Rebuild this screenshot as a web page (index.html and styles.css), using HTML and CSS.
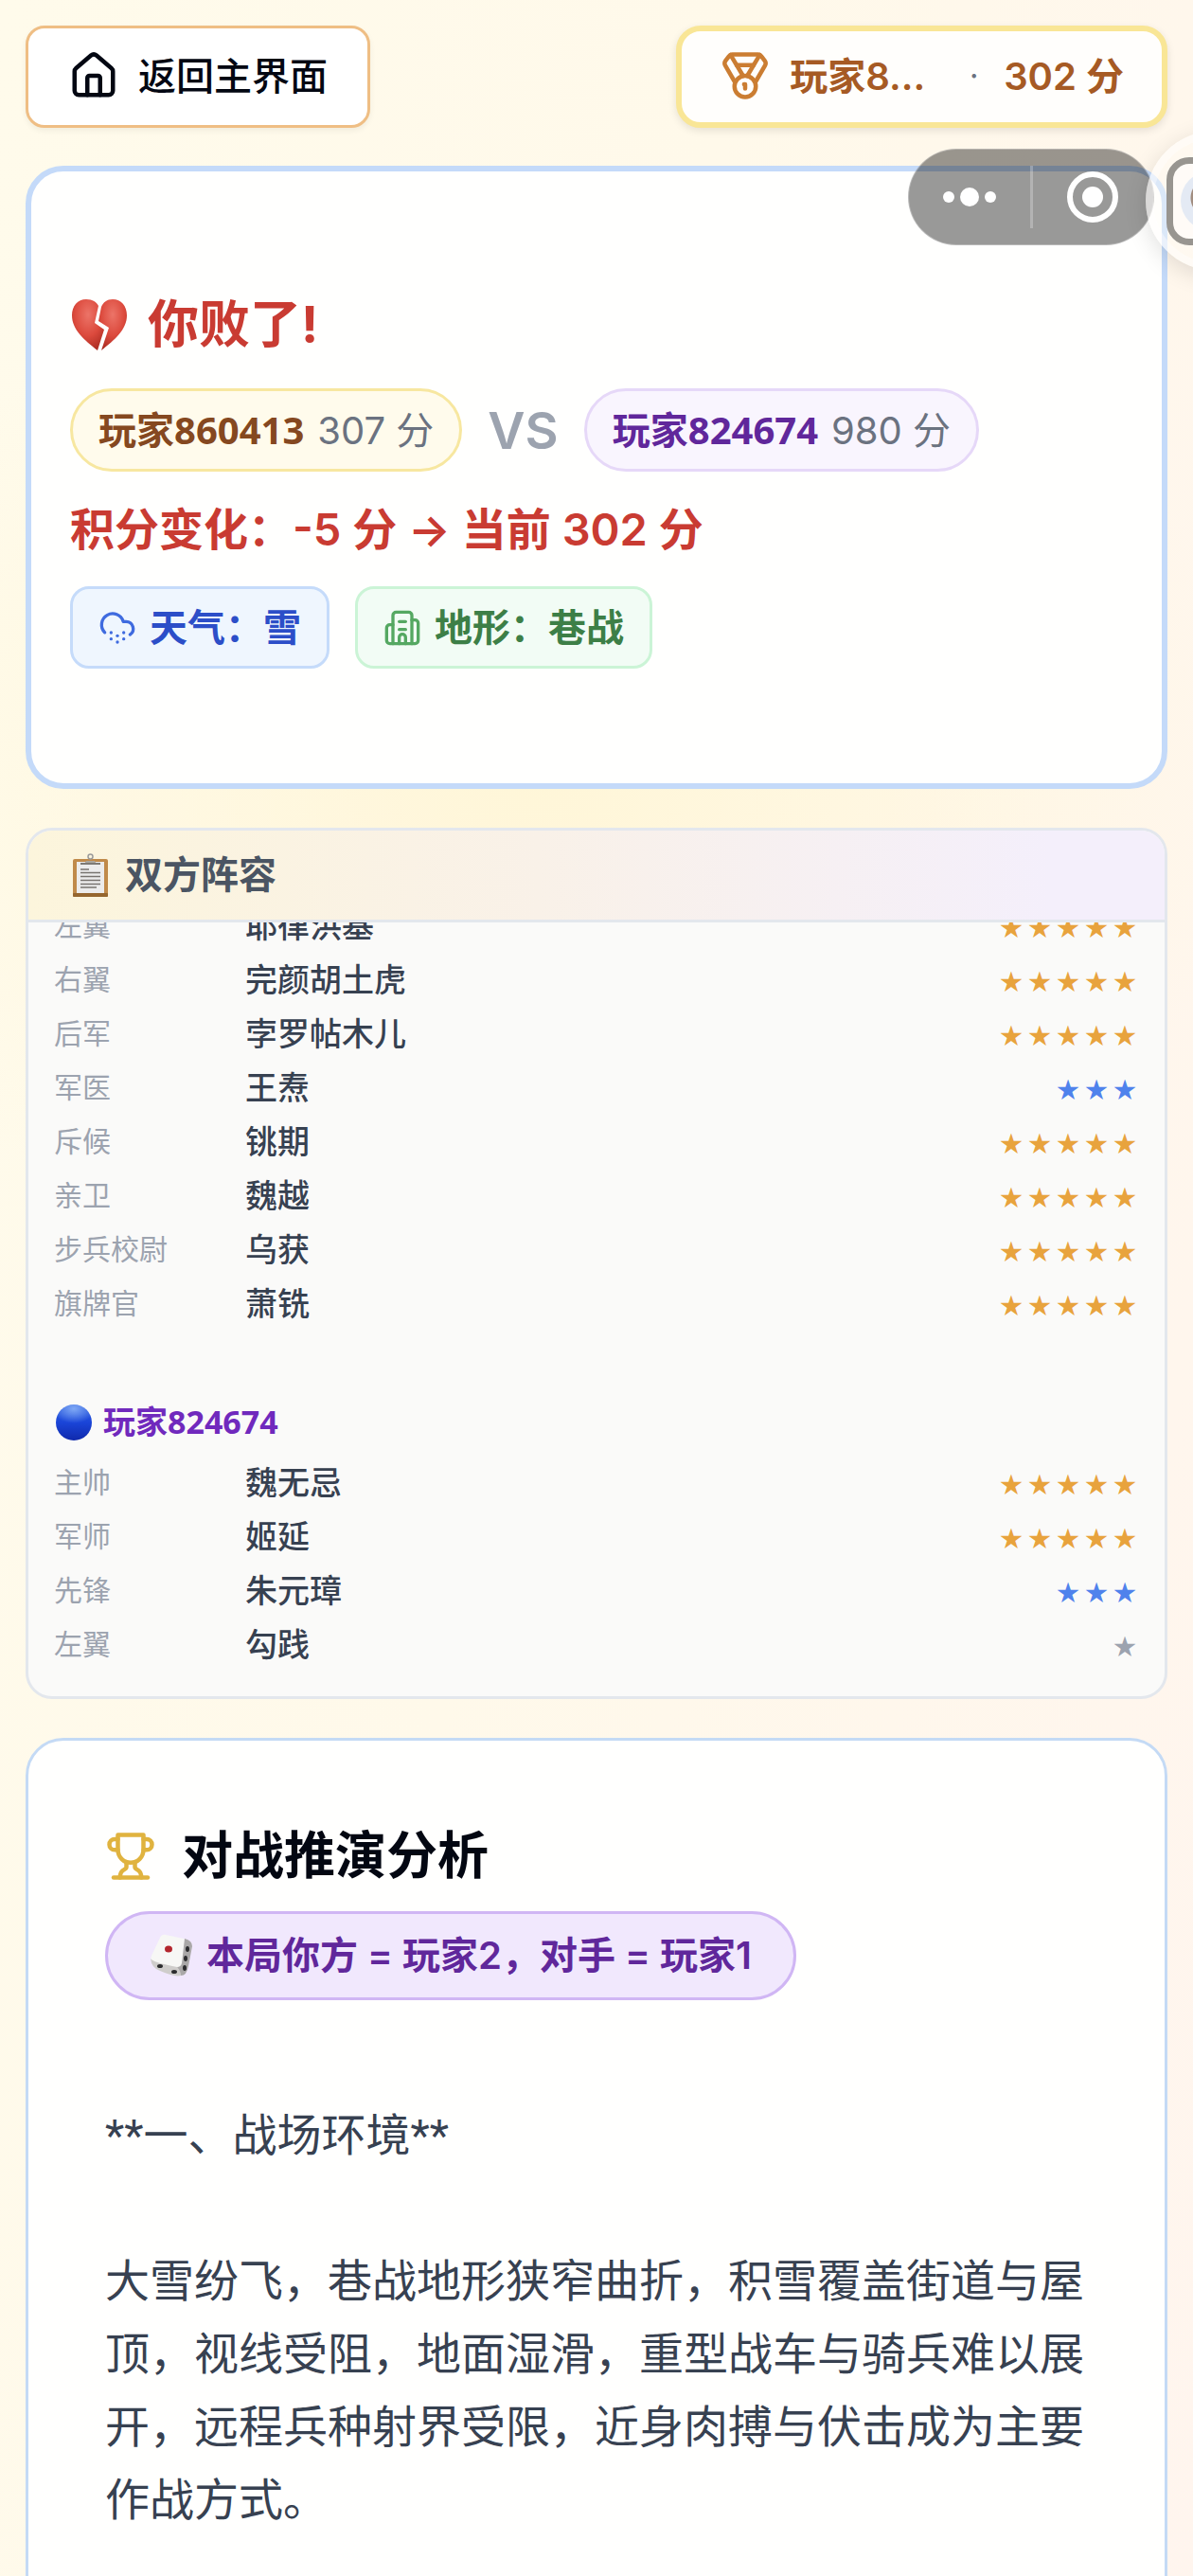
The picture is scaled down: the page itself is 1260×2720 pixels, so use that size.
FILE: index.html
```
<!DOCTYPE html>
<html lang="zh-CN">
<head>
    <meta charset="UTF-8">
    <meta name="viewport" content="width=device-width, initial-scale=1.0">
    <title>对战结果</title>
    <link rel="stylesheet" href="styles.css">
</head>
<body>
    <header class="topbar">
        <button class="home-btn" type="button">
            <svg class="icon icon-lg" viewBox="0 0 24 24"><path d="M15 21v-8a1 1 0 0 0-1-1h-4a1 1 0 0 0-1 1v8"/><path d="M3 10a2 2 0 0 1 .709-1.528l7-5.999a2 2 0 0 1 2.582 0l7 5.999A2 2 0 0 1 21 10v9a2 2 0 0 1-2 2H5a2 2 0 0 1-2-2z"/></svg>
            返回主界面
        </button>
        <div class="score-card">
            <svg class="icon icon-lg medal" viewBox="0 0 24 24"><path d="M7.21 15 2.66 7.14a2 2 0 0 1 .13-2.2L4.4 2.8A2 2 0 0 1 6 2h12a2 2 0 0 1 1.6.8l1.6 2.14a2 2 0 0 1 .14 2.2L16.79 15"/><path d="M11 12 5.12 2.2"/><path d="m13 12 5.88-9.8"/><path d="M8 7h8"/><circle cx="12" cy="17" r="5"/><path d="M12 18v-2h-.5"/></svg>
            <span class="score-name">玩家8...</span>
            <span class="score-dot">·</span>
            <span>302 分</span>
        </div>
    </header>

    <main class="page">
        <section class="result-card">
            <h1 class="result-title">
                <svg class="heart" viewBox="0 0 60 56">
                    <defs>
                        <radialGradient id="heartFill" cx="50%" cy="30%" r="75%">
                            <stop offset="0" stop-color="#ec7468"/>
                            <stop offset=".55" stop-color="#dc4a3d"/>
                            <stop offset="1" stop-color="#a82a20"/>
                        </radialGradient>
                    </defs>
                    <path fill="url(#heartFill)" d="M28 55C14 44 1 33 1 18 1 8 7 1 16 1c7 0 11 3 13 7l-4 18 10 7z"/>
                    <path fill="url(#heartFill)" d="M32 55 40 31l-11-7 3-15C34 4 38 1 44 1c9 0 15 7 15 17 0 15-13 26-27 37z"/>
                </svg>
                你败了!
            </h1>
            <div class="versus">
                <span class="player player-self"><b>玩家860413</b><span>307 分</span></span>
                <span class="vs">VS</span>
                <span class="player player-rival"><b>玩家824674</b><span>980 分</span></span>
            </div>
            <p class="change">积分变化：-5 分 → 当前 302 分</p>
            <div class="chips">
                <span class="chip chip-weather">
                    <svg class="icon icon-sm" viewBox="0 0 24 24"><path d="M4 14.899A7 7 0 1 1 15.71 8h1.79a4.5 4.5 0 0 1 2.5 8.242"/><path d="M8 15h.01"/><path d="M8 19h.01"/><path d="M12 17h.01"/><path d="M12 21h.01"/><path d="M16 15h.01"/><path d="M16 19h.01"/></svg>
                    天气：雪
                </span>
                <span class="chip chip-terrain">
                    <svg class="icon icon-sm" viewBox="0 0 24 24"><path d="M6 22V4a2 2 0 0 1 2-2h8a2 2 0 0 1 2 2v18z"/><path d="M6 10H4a2 2 0 0 0-2 2v8a2 2 0 0 0 2 2h2"/><path d="M18 7h2a2 2 0 0 1 2 2v11a2 2 0 0 1-2 2h-2"/><path d="M10 22v-4a2 2 0 0 1 4 0v4"/><path d="M10 8h4"/><path d="M10 13h4"/></svg>
                    地形：巷战
                </span>
            </div>
        </section>

        <section class="roster-card">
            <h2 class="roster-title">
                <svg class="clipboard" viewBox="0 0 37 46">
                    <rect x="0" y="6" width="37" height="40" rx="2" fill="#c08a4a"/>
                    <rect x="0" y="42" width="37" height="4" rx="1" fill="#95662f"/>
                    <rect x="4" y="9" width="29" height="33" fill="#ececec"/>
                    <circle cx="18.500" cy="3.500" r="2.500" fill="none" stroke="#9b9b9b" stroke-width="1.500"/>
                    <path d="M14 8h9l2 3H12z" fill="#aaa59c"/>
                    <path d="M8 11h21" stroke="#7d7a76" stroke-width="2"/>
                    <path d="M8 17h9M8 20.500h21M8 24.500h21M8 28.500h21M8 32.500h21M8 36h17" stroke="#77736f" stroke-width="1.500"/>
                </svg>
                双方阵容
            </h2>
            <div class="roster-list" id="roster-list"></div>
        </section>

        <section class="analysis-card">
            <h2 class="analysis-title">
                <svg class="icon icon-lg trophy" viewBox="0 0 24 24"><path d="M6 9H4.500a2.500 2.500 0 0 1 0-5H6"/><path d="M18 9h1.500a2.500 2.500 0 0 0 0-5H18"/><path d="M4 22h16"/><path d="M10 14.660V17c0 .550-.470.980-.970 1.210C7.850 18.750 7 20.240 7 22"/><path d="M14 14.660V17c0 .550.470.980.970 1.210C16.150 18.750 17 20.240 17 22"/><path d="M18 2H6v7a6 6 0 0 0 12 0V2Z"/></svg>
                对战推演分析
            </h2>
            <div class="side-pill">
                <svg class="dice" viewBox="0 0 46 46">
                    <path d="M17 1Q13 0 11 4L2 23q-2 5 2 7l25 6q4 1 5-3l5-22q1-5-3-6z" fill="#f7f7f5"/>
                    <path d="M37 5q8 2 8 8l-4 21q-2 11-9 10l-3-9q4 0 5-4z" fill="#aaa8a8"/>
                    <path d="M1 26q2 4 28 9 4 4 4 9-6 2-22-5Q2 36 1 26z" fill="#cfcdcb"/>
                    <ellipse cx="20" cy="16" rx="4" ry="3.500" fill="#b3262e"/>
                    <g fill="#2c2c2e"><ellipse cx="40" cy="16" rx="2" ry="3"/><ellipse cx="38" cy="26" rx="2" ry="3"/><ellipse cx="37" cy="36" rx="2" ry="3"/><ellipse cx="11" cy="34" rx="3" ry="2"/><ellipse cx="26" cy="40" rx="3" ry="2"/></g>
                </svg>
                本局你方 = 玩家2，对手 = 玩家1
            </div>
            <div class="report">
                <p>**一、战场环境**</p>
                <p>大雪纷飞，巷战地形狭窄曲折，积雪覆盖街道与屋顶，视线受阻，地面湿滑，重型战车与骑兵难以展开，远程兵种射界受限，近身肉搏与伏击成为主要作战方式。</p>
            </div>
        </section>
    </main>

    <div class="capsule">
        <button class="capsule-btn" type="button" aria-label="更多">
            <svg width="56" height="54" viewBox="0 0 56 54"><g fill="#fff"><circle cx="6" cy="27" r="6"/><circle cx="28" cy="27" r="10"/><circle cx="50" cy="27" r="6"/></g></svg>
        </button>
        <button class="capsule-btn" type="button" aria-label="关闭">
            <svg width="54" height="54" viewBox="0 0 54 54"><circle cx="27" cy="27" r="24" fill="none" stroke="#fff" stroke-width="6"/><circle cx="27" cy="27" r="11" fill="#fff"/></svg>
        </button>
    </div>
    <button class="float-ball" type="button" aria-label="悬浮窗">
        <span class="float-frame"><span class="float-avatar"></span></span>
    </button>

    <script>
        const roster = [
            {
                rows: [
                    ["左翼", "耶律洪基", 5],
                    ["右翼", "完颜胡土虎", 5],
                    ["后军", "孛罗帖木儿", 5],
                    ["军医", "王焘", 3],
                    ["斥候", "铫期", 5],
                    ["亲卫", "魏越", 5],
                    ["步兵校尉", "乌获", 5],
                    ["旗牌官", "萧铣", 5]
                ]
            },
            {
                player: "玩家824674",
                rows: [
                    ["主帅", "魏无忌", 5],
                    ["军师", "姬延", 5],
                    ["先锋", "朱元璋", 3],
                    ["左翼", "勾践", 1]
                ]
            }
        ];

        function loadRoster() {
            const list = document.getElementById('roster-list');
            roster.forEach((team) => {
                if (team.player) {
                    list.innerHTML += `<h3 class="team-name"><span class="team-ball"></span>${team.player}</h3>`;
                }
                team.rows.forEach(([role, name, stars]) => {
                    list.innerHTML += `
                        <div class="general">
                            <span class="role">${role}</span>
                            <span class="name">${name}</span>
                            <span class="stars stars-${stars}">${'<i>★</i>'.repeat(stars)}</span>
                        </div>`;
                });
            });
        }

        loadRoster();
    </script>
</body>
</html>
```
FILE: styles.css
```
* {
    box-sizing: border-box;
}
body {
    margin: 0;
    height: 100vh;
    overflow: hidden;
    font-family: Inter, "Noto Sans CJK SC", sans-serif;
    font-size: 40px;
    line-height: 53px;
    color: #374151;
    background:
        radial-gradient(ellipse 60% 22% at 45% 30%, #fff6d8, transparent),
        linear-gradient(100deg, #fffbeb, #fff9ea 45%, #fff5ee);
}
h1, h2, h3, p {
    margin: 0;
}
button {
    font: inherit;
    cursor: pointer;
}
.icon {
    flex: none;
    fill: none;
    stroke: currentColor;
    stroke-width: 2;
    stroke-linecap: round;
    stroke-linejoin: round;
}
.icon-lg {
    width: 54px;
    height: 54px;
}
.icon-sm {
    width: 40px;
    height: 40px;
}

/* top bar */
.topbar {
    display: flex;
    justify-content: space-between;
    padding: 27px 27px 40px;
}
.home-btn {
    display: flex;
    align-items: center;
    gap: 20px;
    height: 108px;
    padding: 0 42px 2px;
    font-weight: 500;
    color: #030712;
    background: #fff;
    border: 3px solid #efbe84;
    border-radius: 20px;
    box-shadow: 0 3px 6px rgba(0, 0, 0, 0.06);
}
.score-card {
    display: flex;
    align-items: center;
    height: 108px;
    padding: 0 40px 2px;
    font-weight: 600;
    color: #a65a24;
    background: #fffefc;
    border: 6px solid #f9e696;
    border-radius: 26px;
    box-shadow: 0 3px 9px rgba(0, 0, 0, 0.1);
}
.medal {
    color: #cb7d32;
    margin-right: 20px;
}
.score-name {
    width: 190px;
}
.score-dot {
    width: 36px;
    font-size: 28px;
    color: #6b7280;
}

.page {
    display: flex;
    flex-direction: column;
    gap: 41px;
    padding: 0 27px;
}

/* result */
.result-card {
    display: flex;
    flex-direction: column;
    gap: 27px;
    padding: 121px 41px;
    background: #fffffe;
    border: 6px solid #c4daf9;
    border-radius: 40px;
}
.result-title {
    display: flex;
    align-items: center;
    gap: 20px;
    font-size: 54px;
    line-height: 81px;
    color: #c93b32;
}
.heart {
    width: 62px;
    height: 56px;
}
.versus {
    display: flex;
    align-items: center;
    gap: 27px;
}
.player {
    display: flex;
    align-items: baseline;
    gap: 14px;
    padding: 14px 27px;
    color: #6b7280;
    border: 3px solid;
    border-radius: 44px;
}
.player b, .team-name {
    font-family: "Noto Sans", "Noto Sans CJK SC", sans-serif;
}
.player-self {
    background: #fffbec;
    border-color: #f7e7a0;
}
.player-self b {
    color: #854820;
}
.player-rival {
    background: #f9f5fe;
    border-color: #e6d8f8;
}
.player-rival b {
    color: #60279b;
}
.vs {
    font-size: 54px;
    font-weight: 600;
    color: #9ca3af;
}
.change {
    font-size: 47px;
    line-height: 67px;
    font-weight: 600;
    color: #c93b32;
}
.chips {
    display: flex;
    gap: 27px;
}
.chip {
    display: flex;
    align-items: center;
    gap: 14px;
    padding: 14px 27px;
    font-weight: 700;
    border: 3px solid;
    border-radius: 20px;
}
.chip-weather {
    color: #2c4ec8;
    background: #eff6fe;
    border-color: #c5dbfa;
}
.chip-weather .icon {
    color: #3f6bdf;
}
.chip-terrain {
    color: #3d7f47;
    background: #f2fcf5;
    border-color: #cbf4d6;
}
.chip-terrain .icon {
    color: #55a862;
}

/* roster */
.roster-card {
    background: #fafaf9;
    border: 3px solid #e3e7ed;
    border-radius: 28px;
    overflow: hidden;
}
.roster-title {
    display: flex;
    align-items: center;
    gap: 18px;
    padding: 20px 47px 21px;
    font-size: 40px;
    color: #4b5563;
    background: linear-gradient(to right, #fcf5dc, #f9f1e8 45%, #f4effb 90%);
    border-bottom: 3px solid #e3e7ed;
}
.clipboard {
    width: 37px;
    height: 46px;
}
/* scrolled to its end, earlier rows run out under the title */
.roster-list {
    display: flex;
    flex-direction: column;
    justify-content: flex-end;
    height: 817px;
    padding: 0 30px 26px 27px;
    overflow: hidden;
}
.general {
    display: grid;
    grid-template-columns: 202px 1fr auto;
    align-items: center;
    flex: none;
    height: 57px;
}
.role {
    font-size: 30px;
    color: #9ca3af;
}
.name {
    font-size: 34px;
    font-weight: 500;
}
.stars {
    display: flex;
    gap: 6px;
    font-family: "Noto Sans CJK SC", sans-serif;
    font-size: 24px;
}
.stars i {
    font-style: normal;
}
.stars-5 {
    color: #e8a33d;
}
.stars-3 {
    color: #4f82ec;
}
.stars-1 {
    color: #9ca3af;
}
.team-name {
    display: flex;
    align-items: center;
    gap: 12px;
    margin: 70px 0 9px;
    font-size: 34px;
    color: #7029bd;
}
.team-ball {
    width: 38px;
    height: 38px;
    margin-left: 2px;
    border-radius: 50%;
    background: radial-gradient(ellipse 60% 40% at 50% 12%, #7fa8f5, transparent), linear-gradient(#2f62e0, #1a45d8 50%, #1029ac);
}

/* analysis */
.analysis-card {
    padding: 81px 81px 160px;
    background: #fffffe;
    border: 3px solid #c4daf5;
    border-radius: 40px;
}
.analysis-title {
    display: flex;
    align-items: center;
    gap: 27px;
    font-size: 54px;
    line-height: 81px;
    font-weight: 700;
    color: #030712;
}
.trophy {
    color: #e0b33f;
}
.side-pill {
    display: flex;
    align-items: center;
    gap: 14px;
    width: fit-content;
    margin: 18px 0 104px;
    padding: 17px 44px 18px;
    font-weight: 600;
    color: #60279b;
    background: #f1e8fd;
    border: 3px solid #d0b6f4;
    border-radius: 47px;
}
.dice {
    width: 46px;
    height: 46px;
}
.report {
    display: flex;
    flex-direction: column;
    gap: 77px;
    font-family: Roboto, "Noto Sans CJK SC", sans-serif;
    font-size: 47px;
    line-height: 77px;
}

/* floating controls */
.capsule {
    position: fixed;
    top: 157px;
    right: 41px;
    display: flex;
    align-items: center;
    width: 260px;
    height: 102px;
    background: rgba(0, 0, 0, 0.4);
    border: 1px solid rgba(255, 255, 255, 0.3);
    border-radius: 51px;
}
.capsule-btn {
    display: flex;
    align-items: center;
    justify-content: center;
    flex: 1;
    height: 66px;
    padding: 0;
    background: none;
    border: 0;
}
.capsule-btn + .capsule-btn {
    border-left: 3px solid rgba(255, 255, 255, 0.25);
}
.float-ball {
    position: fixed;
    top: 138px;
    right: -98px;
    width: 148px;
    height: 148px;
    padding: 0 0 0 22px;
    background: rgba(255, 252, 248, 0.4);
    border: 0;
    border-radius: 50%;
    box-shadow: 0 6px 24px rgba(0, 0, 0, 0.12), inset 0 0 0 8px rgba(255, 255, 255, 0.4);
}
.float-frame {
    display: flex;
    align-items: center;
    width: 93px;
    height: 93px;
    padding-left: 8px;
    background: #fffbf7;
    border: 7px solid #989590;
    border-radius: 24px;
}
.float-avatar {
    width: 62px;
    height: 62px;
    border-radius: 50%;
    background: radial-gradient(circle at 50% 45%, #a18d80 20px, #e4eaf4 21px);
}
```
